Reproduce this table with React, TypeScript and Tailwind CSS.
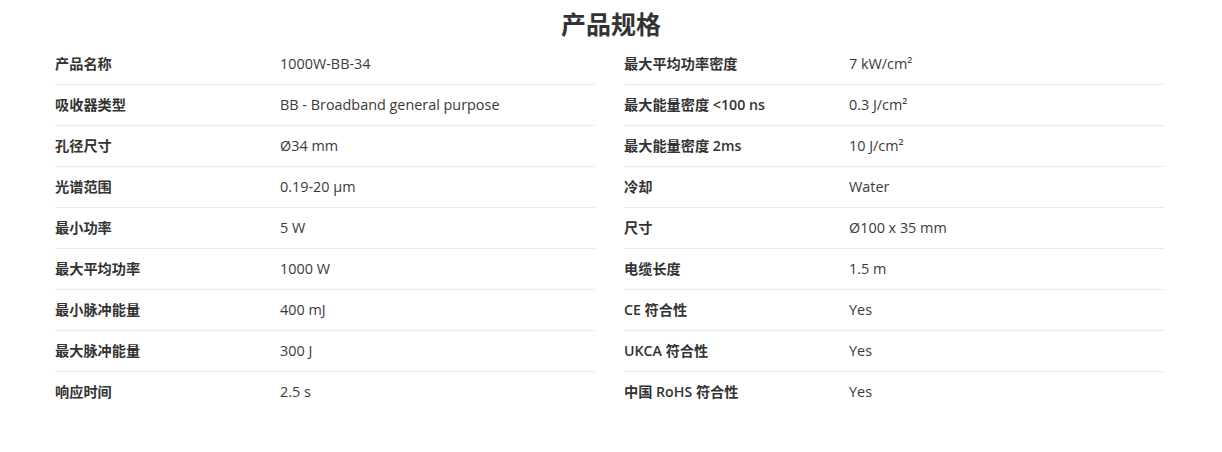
const LEFT: [string, string][] = [
  ['产品名称', '1000W-BB-34'],
  ['吸收器类型', 'BB - Broadband general purpose'],
  ['孔径尺寸', 'Ø34 mm'],
  ['光谱范围', '0.19-20 µm'],
  ['最小功率', '5 W'],
  ['最大平均功率', '1000 W'],
  ['最小脉冲能量', '400 mJ'],
  ['最大脉冲能量', '300 J'],
  ['响应时间', '2.5 s'],
]

const RIGHT: [string, string][] = [
  ['最大平均功率密度', '7 kW/cm²'],
  ['最大能量密度 <100 ns', '0.3 J/cm²'],
  ['最大能量密度 2ms', '10 J/cm²'],
  ['冷却', 'Water'],
  ['尺寸', 'Ø100 x 35 mm'],
  ['电缆长度', '1.5 m'],
  ['CE 符合性', 'Yes'],
  ['UKCA 符合性', 'Yes'],
  ['中国 RoHS 符合性', 'Yes'],
]

function SpecList({ rows }: { rows: [string, string][] }) {
  return (
    <div className="flex flex-col">
      {rows.map(([k, v]) => (
        <div
          key={k}
          className="flex h-[41px] items-center border-b border-[#ebebeb] pb-px last:h-[40px] last:border-b-0"
        >
          <div className="w-[225px] flex-none text-[14.2px] font-semibold text-[#333]">{k}</div>
          <div className="flex-1 text-[14.4px] text-[#3a3a3a]">{v}</div>
        </div>
      ))}
    </div>
  )
}

export default function App() {
  return (
    <div
      className="min-h-[452px] bg-white"
      style={{ fontFamily: '"Open Sans", "Noto Sans CJK SC", sans-serif' }}
    >
      <div className="flex h-[44px] items-center justify-center pt-[6px]">
        <h2 className="text-[25px] font-bold text-[#333]">产品规格</h2>
      </div>
      <div className="ml-[55px] grid w-[1109px] grid-cols-2 gap-[29px]">
        <SpecList rows={LEFT} />
        <SpecList rows={RIGHT} />
      </div>
    </div>
  )
}
